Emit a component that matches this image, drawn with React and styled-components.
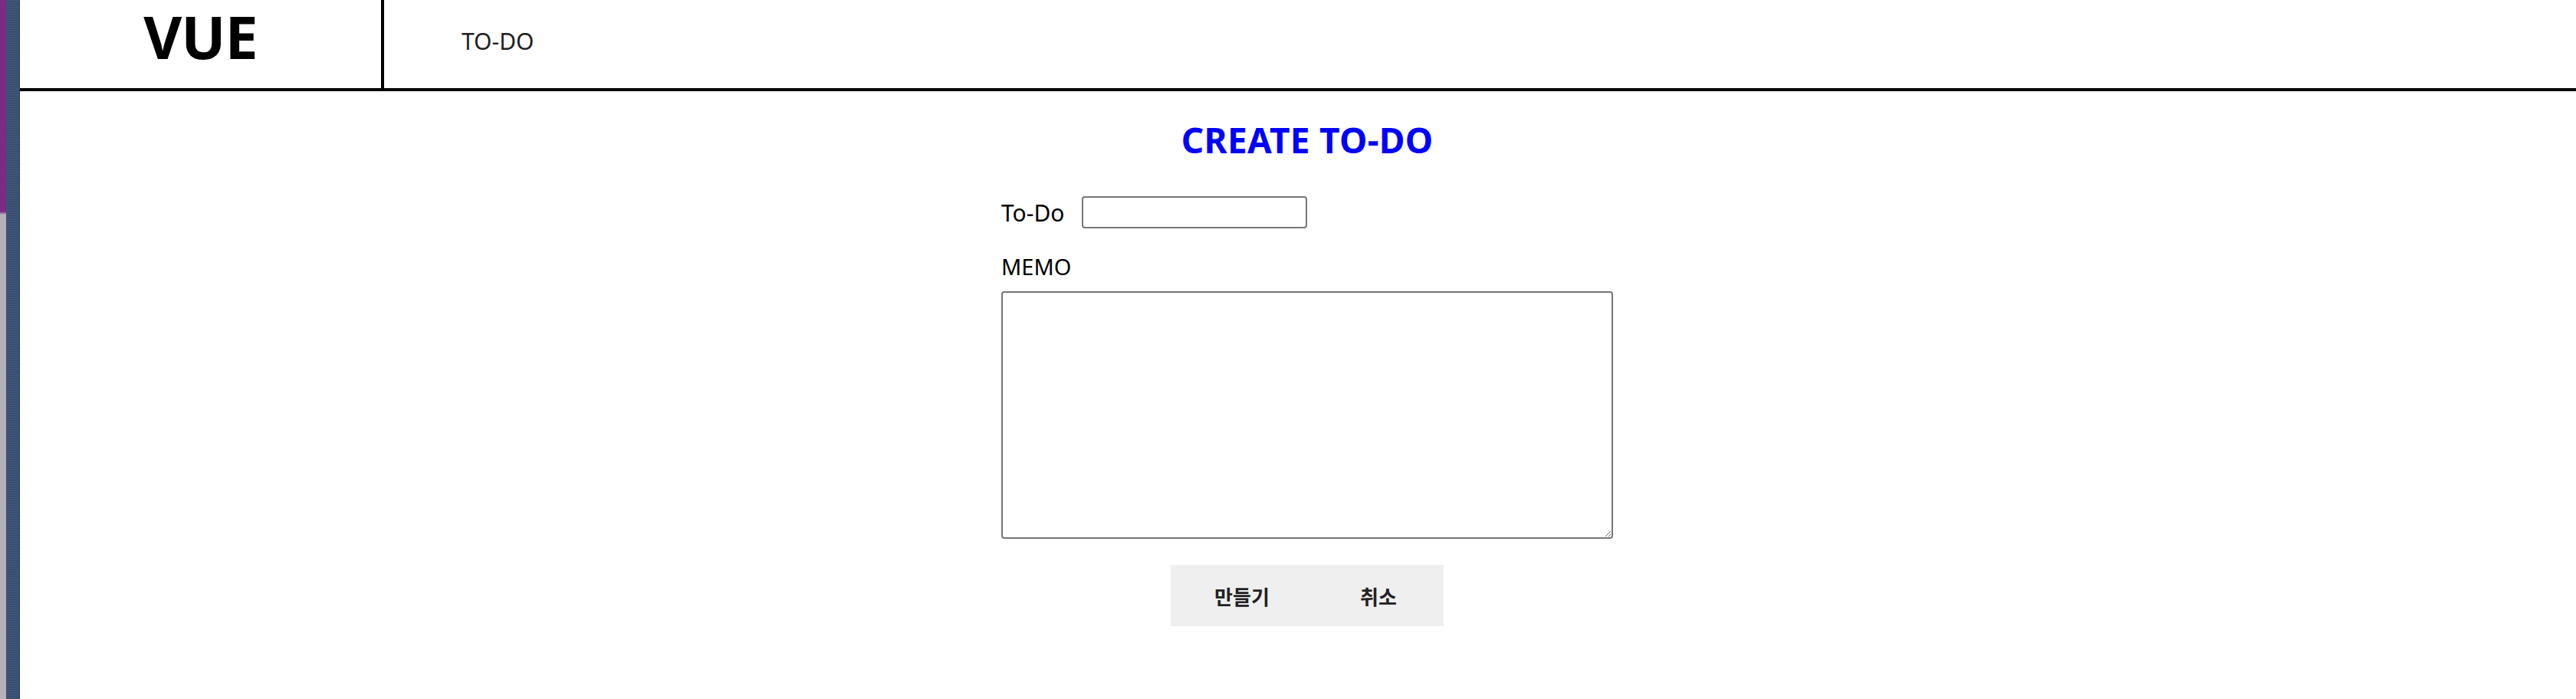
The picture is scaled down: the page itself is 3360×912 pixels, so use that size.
import React from 'react';
import styled, { createGlobalStyle } from 'styled-components';

const GlobalStyle = createGlobalStyle`
html, body {
    margin: 0;
    padding: 0;
    background: #fff;
}
body {
    font-family: "Noto Sans", "Noto Sans CJK KR", sans-serif;
    color: #000;
}
`

const Page = styled.div`
display: flex;
min-height: 100vh;
`
const Edge = styled.div`
display: flex;
width: 26px;
flex-shrink: 0;
`
const EdgeShade = styled.div`
width: 8px;
background: linear-gradient(to bottom, #7b2a86 0, #7b2a86 276px, #b3b1b8 280px, #b3b1b8 100%);
`
const EdgeWindow = styled.div`
flex: 1;
background: repeating-linear-gradient(to bottom, #3f5679 0, #3f5679 2px, #36496a 2px, #36496a 3px);
border-right: 1px solid #2c3b55;
`
const Main = styled.div`
flex: 1;
display: flex;
flex-direction: column;
`
const Header = styled.header`
display: flex;
align-items: stretch;
height: 115px;
border-bottom: 4px solid #000;
`
const Logo = styled.div`
width: 475px;
border-right: 4px solid #000;
display: flex;
justify-content: center;
align-items: flex-start;
padding-top: 9px;
box-sizing: border-box;
font-size: 77px;
line-height: 1;
font-weight: 700;
letter-spacing: -1px;
`
const Nav = styled.nav`
padding: 33px 0 0 101px;
font-size: 30px;
color: #222;
`
const Content = styled.main`
display: flex;
flex-direction: column;
align-items: center;
padding-left: 24px;
`
const Title = styled.h1`
margin: 32px 0 0;
font-size: 46px;
font-weight: 700;
letter-spacing: 0.3px;
color: #0000ff;
`
const Form = styled.form`
width: 798px;
display: flex;
flex-direction: column;
`
const Row = styled.div`
display: flex;
align-items: center;
gap: 23px;
margin-top: 43px;
`
const Label = styled.label`
font-size: ${props => props.size || '30px'};
margin-top: ${props => props.top || '0'};
`
const TextInput = styled.input`
width: 294px;
height: 42px;
box-sizing: border-box;
border: 2px solid #767676;
border-radius: 4px;
background: #fff;
`
const Memo = styled.textarea`
margin-top: 13px;
width: 798px;
height: 323px;
box-sizing: border-box;
border: 2px solid #767676;
border-radius: 4px;
background: #fff;
`
const Buttons = styled.div`
display: flex;
justify-content: center;
margin-top: 34px;
`
const Button = styled.button`
width: 178px;
height: 80px;
border: none;
background: #efefef;
font-family: "Noto Sans CJK KR", sans-serif;
font-size: 26px;
font-weight: 700;
color: #222;
padding: 0 0 0 8px;
cursor: pointer;
`

const App = () => {
    return (
        <Page>
            <GlobalStyle />
            <Edge>
                <EdgeShade />
                <EdgeWindow />
            </Edge>
            <Main>
                <Header>
                    <Logo>VUE</Logo>
                    <Nav>TO-DO</Nav>
                </Header>
                <Content>
                    <Title>CREATE TO-DO</Title>
                    <Form onSubmit={e => e.preventDefault()}>
                        <Row>
                            <Label htmlFor='todo'>To-Do</Label>
                            <TextInput id='todo' type='text' />
                        </Row>
                        <Label htmlFor='memo' size='29px' top='30px'>MEMO</Label>
                        <Memo id='memo' />
                    </Form>
                    <Buttons>
                        <Button type='button'>만들기</Button>
                        <Button type='button'>취소</Button>
                    </Buttons>
                </Content>
            </Main>
        </Page>
    )
}

export default App;
